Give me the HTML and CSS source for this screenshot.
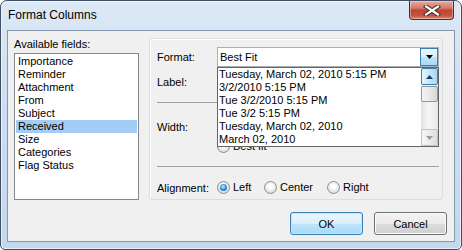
FILE: index.html
```html
<!DOCTYPE html>
<html lang="en">
<head>
<meta charset="UTF-8">
<title>Format Columns</title>
<link rel="stylesheet" href="styles.css">
</head>
<body>

    <div class="window">
        <!-- Title bar -->
        <div class="titlebar">
            <span class="title">Format Columns</span>
            <button class="close-button">
                <svg width="18" height="11" viewBox="0 0 18 11">
                    <path d="M3 1.5 L15 9.5 M15 1.5 L3 9.5" stroke="#3b2a2a" stroke-width="4.2" stroke-linecap="square" fill="none"/>
                    <path d="M3 1.5 L15 9.5 M15 1.5 L3 9.5" stroke="#ffffff" stroke-width="2.2" stroke-linecap="square" fill="none"/>
                </svg>
            </button>
        </div>

        <div class="client">
            <div class="main">
                <!-- Available fields -->
                <div class="fields">
                    <div class="fields-label">Available fields:</div>
                    <ul class="listbox">
                        <li>Importance</li>
                        <li>Reminder</li>
                        <li>Attachment</li>
                        <li>From</li>
                        <li>Subject</li>
                        <li class="selected">Received</li>
                        <li>Size</li>
                        <li>Categories</li>
                        <li>Flag Status</li>
                    </ul>
                </div>

                <!-- Column options -->
                <div class="group">
                    <div class="row row-format">
                        <span class="row-label">Format:</span>
                        <div class="combo">
                            <span class="combo-text">Best Fit</span>
                            <span class="combo-button">
                                <svg width="7" height="4" viewBox="0 0 7 4"><polygon points="0,0 7,0 3.5,4" fill="#000"/></svg>
                            </span>
                            <div class="dropdown">
                                <ul class="dropdown-list">
                                    <li>Tuesday, March 02, 2010 5:15 PM</li>
                                    <li>3/2/2010 5:15 PM</li>
                                    <li>Tue 3/2/2010 5:15 PM</li>
                                    <li>Tue 3/2 5:15 PM</li>
                                    <li>Tuesday, March 02, 2010</li>
                                    <li>March 02, 2010</li>
                                </ul>
                                <div class="scrollbar">
                                    <span class="scroll-btn scroll-up">
                                        <svg width="7" height="4" viewBox="0 0 7 4"><polygon points="0,4 7,4 3.5,0" fill="#1c3f63"/></svg>
                                    </span>
                                    <span class="scroll-thumb"></span>
                                    <span class="scroll-track"></span>
                                    <span class="scroll-btn scroll-down">
                                        <svg width="7" height="4" viewBox="0 0 7 4"><polygon points="0,0 7,0 3.5,4" fill="#9a9a9a"/></svg>
                                    </span>
                                </div>
                            </div>
                        </div>
                    </div>

                    <div class="row row-name">
                        <span class="row-label">Label:</span>
                        <div class="textbox"></div>
                    </div>

                    <div class="separator sep-top"></div>

                    <div class="row row-width">
                        <span class="row-label">Width:</span>
                        <div class="textbox textbox-small"></div>
                    </div>

                    <div class="option-row">
                        <label class="option"><span class="radio"></span>Best fit</label>
                    </div>

                    <div class="separator sep-bottom"></div>

                    <div class="row row-align">
                        <span class="row-label">Alignment:</span>
                        <label class="option option-left"><span class="radio checked"></span>Left</label>
                        <label class="option option-center"><span class="radio"></span>Center</label>
                        <label class="option"><span class="radio"></span>Right</label>
                    </div>
                </div>
            </div>

            <div class="buttons">
                <button class="btn btn-default">OK</button>
                <button class="btn">Cancel</button>
            </div>
        </div>
    </div>

</body>
</html>
```

FILE: styles.css
```css
body {
    margin: 0;
    padding: 0;
    width: 462px;
    height: 250px;
    overflow: hidden;
    background-color: #ffffff;
    font-family: 'Liberation Sans', Arial, sans-serif;
    font-size: 11px;
    color: #000;
}

ul {
    list-style: none;
    margin: 0;
    padding: 0;
}

/* Window frame */
.window {
    box-sizing: border-box;
    width: 462px;
    height: 250px;
    display: flex;
    flex-direction: column;
    padding: 0 6px 7px 6px;
    border: 1px solid #3f4e62;
    border-radius: 7px 7px 5px 5px;
    background: linear-gradient(#dde8f5, #cddff1 40%, #c3d7ed);
    box-shadow: inset 0 0 0 1px rgba(255, 255, 255, 0.6);
}

.titlebar {
    height: 29px;
    display: flex;
    justify-content: space-between;
    align-items: flex-start;
}

.title {
    line-height: 29px;
    padding-left: 1px;
    font-size: 12px;
}

.close-button {
    box-sizing: border-box;
    width: 45px;
    height: 19px;
    margin: 0 1px 0 0;
    padding: 0;
    border: 1px solid #5a2a26;
    border-top: none;
    border-radius: 0 0 4px 4px;
    background: linear-gradient(#e8a99e, #d47a6c 40%, #c0432f 50%, #c4533e 80%, #d88a70);
    box-shadow: inset 0 0 0 1px rgba(255, 255, 255, 0.35);
    display: flex;
    justify-content: center;
    align-items: center;
}

/* Client area */
.client {
    flex: 1;
    display: flex;
    flex-direction: column;
    border: 1px solid #8598ae;
    background-color: #f0f0f0;
}

.main {
    display: flex;
    align-items: flex-start;
    padding: 6px 0 0 6px;
    gap: 10px;
}

.fields-label {
    height: 15px;
    line-height: 15px;
    margin-bottom: 1px;
}

.listbox {
    box-sizing: border-box;
    width: 125px;
    height: 147px;
    border: 1px solid #828790;
    background-color: #fff;
    padding: 1px;
}

.listbox li {
    height: 13px;
    line-height: 13px;
    padding-left: 2px;
}

.listbox li.selected {
    background-color: #a3cdf4;
}

/* Group box */
.group {
    box-sizing: border-box;
    width: 294px;
    height: 162px;
    margin-top: 1px;
    padding: 8px 3px 0 7px;
    border: 1px solid #d5dfe5;
    border-radius: 3px;
    box-shadow: inset 1px 1px 0 #fff;
}

.row {
    display: flex;
    align-items: center;
}

.row-label {
    width: 60px;
    flex-shrink: 0;
}

.row-name {
    margin-top: 4px;
}

.row-width {
    margin-top: 13px;
}

.row-align {
    margin-top: 13px;
    height: 15px;
}

.separator {
    height: 1px;
    background-color: #a0a0a0;
}

.sep-top {
    margin-top: 10px;
}

.sep-bottom {
    margin-top: 13px;
}

.combo {
    position: relative;
    box-sizing: border-box;
    width: 222px;
    height: 20px;
    border: 1px solid #abadb3;
    background-color: #fff;
    display: flex;
    align-items: center;
    justify-content: space-between;
}

.combo-text {
    padding-left: 2px;
}

.combo-button {
    box-sizing: border-box;
    width: 18px;
    height: 18px;
    border: 1px solid #3c7fb1;
    background: linear-gradient(#eaf6fd, #d9f0fc 50%, #bee6fd 50%, #a7d9f5);
    display: flex;
    justify-content: center;
    align-items: center;
}

.textbox {
    box-sizing: border-box;
    width: 222px;
    height: 21px;
    border: 1px solid #abadb3;
    background-color: #fff;
}

.textbox-small {
    width: 60px;
}

.option-row {
    margin: 3px 0 0 60px;
    height: 13px;
    display: flex;
}

.option {
    display: flex;
    align-items: center;
    gap: 3px;
    line-height: 15px;
}

.option-left {
    width: 47px;
}

.option-center {
    width: 63px;
}

.radio {
    position: relative;
    box-sizing: border-box;
    width: 13px;
    height: 13px;
    border: 1px solid #8e8f8f;
    border-radius: 50%;
    background: radial-gradient(circle at 50% 40%, #ffffff 20%, #e6e6e6 60%, #cbcbcb);
}

.radio.checked::after {
    content: "";
    position: absolute;
    left: 2px;
    top: 2px;
    width: 7px;
    height: 7px;
    border-radius: 50%;
    background: radial-gradient(circle at 45% 40%, #a6e2ff 10%, #2d8fd6 50%, #0c4f86 100%);
}

/* Open dropdown */
.dropdown {
    position: absolute;
    left: -1px;
    top: 19px;
    box-sizing: border-box;
    width: 222px;
    height: 80px;
    border: 1px solid #646464;
    background-color: #fff;
    display: flex;
    z-index: 10;
}

.dropdown-list {
    flex: 1;
    padding-left: 1px;
}

.dropdown-list li {
    height: 13px;
    line-height: 13px;
    white-space: nowrap;
}

.scrollbar {
    width: 17px;
    display: flex;
    flex-direction: column;
    background: linear-gradient(to right, #e2e2e2, #f4f4f4 40%, #f4f4f4 60%, #e6e6e6);
}

.scroll-btn {
    box-sizing: border-box;
    height: 17px;
    border-radius: 2px;
    display: flex;
    justify-content: center;
    align-items: center;
}

.scroll-up {
    border: 1px solid #3c7fb1;
    background: linear-gradient(to right, #e3f4fc, #c5e6f7 50%, #a9d7f1);
}

.scroll-down {
    border: 1px solid #c2c2c2;
    background: linear-gradient(to right, #f6f6f6, #ebebeb 50%, #dcdcdc);
}

.scroll-thumb {
    box-sizing: border-box;
    height: 16px;
    margin-top: 1px;
    border: 1px solid #959595;
    border-radius: 2px;
    background: linear-gradient(to right, #f4f4f4, #e8e8e8 50%, #d8d8d8);
}

.scroll-track {
    flex: 1;
}

/* Dialog buttons */
.buttons {
    display: flex;
    justify-content: flex-end;
    gap: 11px;
    padding-right: 7px;
    margin-top: 12px;
}

.btn {
    box-sizing: border-box;
    width: 73px;
    height: 23px;
    padding: 0;
    font-family: inherit;
    font-size: 11px;
    color: #000;
    border: 1px solid #707070;
    border-radius: 3px;
    background: linear-gradient(#f2f2f2, #ebebeb 50%, #dddddd 50%, #cfcfcf);
    box-shadow: inset 0 0 0 1px #fcfcfc;
}

.btn-default {
    border-color: #3c7fb1;
    background: linear-gradient(#eaf6fd, #d9f0fc 50%, #bee6fd 50%, #a7d9f5);
    box-shadow: inset 0 0 0 1px #bfe8ff;
}
```
